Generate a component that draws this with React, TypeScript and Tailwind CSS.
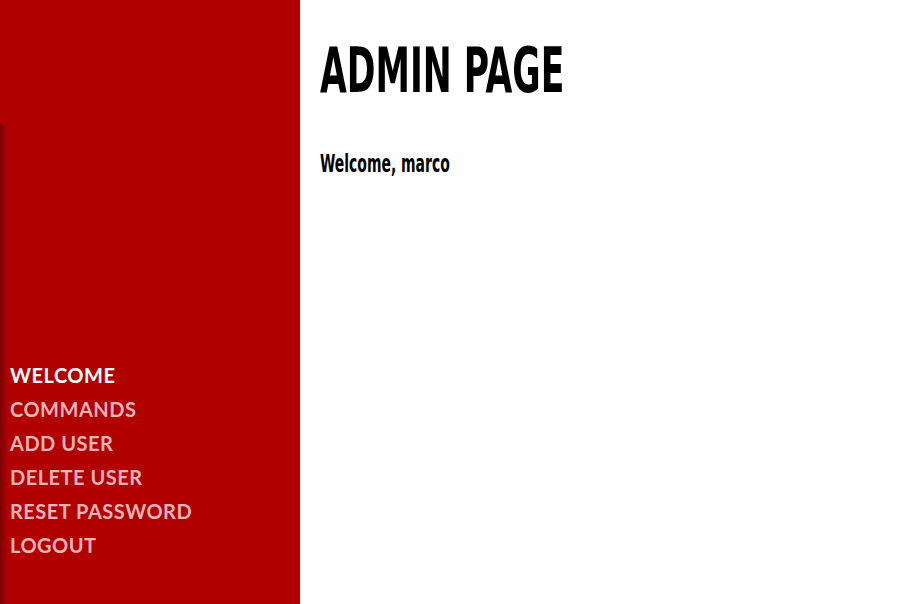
export default function App() {
  const items = ["Welcome", "Commands", "Add User", "Delete User", "Reset Password", "Logout"];

  return (
    <div className="flex h-[604px] w-[900px] bg-white">
      <aside className="flex w-[300px] flex-col bg-[#b00000]">
        <div className="h-[124px]"></div>
        <div className="flex flex-1">
          <div className="w-[7px] rounded-tr-[6px] bg-gradient-to-r from-[#7a0000] to-[#b00000]"></div>
          <nav className="flex flex-1 flex-col justify-end pb-[42px] pl-[3px] font-['Lato',sans-serif]">
            {items.map((label, i) => (
              <a
                key={label}
                href="#"
                className={`h-[34px] text-[20px] font-bold uppercase leading-[34px] tracking-[0.5px] ${
                  i === 0 ? "text-white" : "text-[#f1b4b8]"
                }`}
              >
                {label}
              </a>
            ))}
          </nav>
        </div>
      </aside>
      <main className="flex-1 pl-[20px] font-['DejaVu_Sans_Condensed','DejaVu_Sans',sans-serif]">
        <h1 className="mt-[38px] origin-left scale-x-[0.61] text-[63px] font-bold leading-[66px] text-black">
          ADMIN PAGE
        </h1>
        <p className="mt-[45px] origin-left scale-x-[0.62] text-[25px] font-bold leading-[30px] text-black">
          Welcome, marco
        </p>
      </main>
    </div>
  );
}
